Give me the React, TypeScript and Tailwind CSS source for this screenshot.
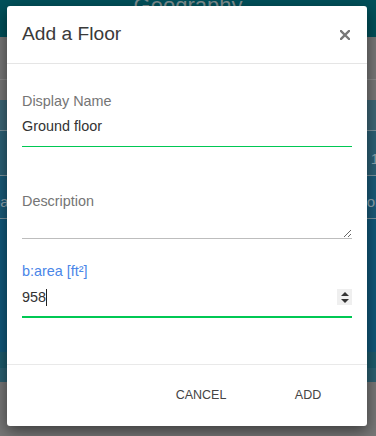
import React from "react";

const font = { fontFamily: '"Liberation Sans", Arial, sans-serif' };

export default function App() {
  return (
    <div
      className="relative w-[376px] h-[436px] overflow-hidden bg-[#777777]"
      style={font}
    >
      {/* Page behind the dimmed overlay */}
      <div className="flex flex-col w-full h-full">
        <div className="h-[37px] bg-[#00505a] flex justify-center overflow-hidden">
          <span className="text-[22px] leading-none text-[#7f8e90] -mt-[5px]">
            Geography
          </span>
        </div>
        <div className="h-[42px] bg-[#777777]" />
        <div className="h-px bg-[#8a8a8a]" />
        <div className="h-[20px] bg-[#777777]" />
        <div className="h-[30px] bg-[#3d6676]" />
        <div className="h-px bg-[#7c949d]" />
        <div className="h-[44px] bg-[#2c6176] flex justify-end items-end pb-[5px]">
          <span className="text-[15px] text-[#8fa6b0] mr-[-3px]">1</span>
        </div>
        <div className="h-px bg-[#7c949d]" />
        <div className="h-[42px] bg-[#1a5b79] flex justify-between items-end pb-[5px]">
          <span className="text-[15px] text-[#8fa6b0] ml-[-8px]">oa</span>
          <span className="text-[15px] text-[#8fa6b0] mr-[-4px]">or</span>
        </div>
        <div className="h-px bg-[#7c949d]" />
        <div className="h-[133px] bg-[#11587a]" />
        <div className="h-[16px] bg-[#1d5b6c]" />
        <div className="h-[14px] bg-[#2c6172]" />
        <div className="flex-1 bg-[#777777]" />
      </div>

      {/* Modal */}
      <div className="absolute left-[7px] top-[6px] w-[360px] h-[420px] bg-white rounded-[3px] shadow-[0_5px_15px_rgba(0,0,0,0.5)] flex flex-col">
        <div className="h-[58px] border-b border-[#e5e5e5] px-[15px] flex items-center justify-between">
          <span className="text-[19.2px] text-[#3a3a3a] leading-none -mt-[1px]">
            Add a Floor
          </span>
          <svg width="10" height="10" viewBox="0 0 10 10" className="mr-[2px]">
            <path
              d="M1 1 L9 9 M9 1 L1 9"
              stroke="#777"
              strokeWidth="2.4"
              strokeLinecap="square"
            />
          </svg>
        </div>

        <div className="h-[300px] px-[15px] pt-[27px] flex flex-col">
          <div className="h-[20px] leading-[20px] text-[14.4px] text-[#757575]">
            Display Name
          </div>
          <div className="mt-[5px] h-[31px] pb-[10px] border-b border-[#00c853] leading-[20px] text-[14.4px] text-[#333]">
            Ground floor
          </div>

          <div className="mt-[44px] h-[20px] leading-[20px] text-[14.4px] text-[#757575]">
            Description
          </div>
          <textarea
            className="mt-[5px] h-[23px] w-full border-b border-[#bdbdbd] resize-y outline-none text-[14.4px] text-[#333]"
            style={font}
            defaultValue=""
          />

          <div className="mt-[22px] h-[20px] leading-[20px] text-[14.4px] text-[#4a86e8]">
            b:area [ft²]
          </div>
          <div className="mt-[6px] h-[31px] pb-[9px] border-b-2 border-[#00c853] flex items-center justify-between">
            <div className="flex items-center h-[20px]">
              <span className="leading-[20px] text-[14.4px] text-[#333]">958</span>
              <span className="w-px h-[17px] bg-[#222]" />
            </div>
            <div className="w-[15px] h-[16px] bg-[#efefef] flex flex-col items-center justify-center gap-[3px]">
              <svg width="8" height="4" viewBox="0 0 8 4">
                <path d="M0 4 L4 0 L8 4 Z" fill="#333" />
              </svg>
              <svg width="8" height="4" viewBox="0 0 8 4">
                <path d="M0 0 L8 0 L4 4 Z" fill="#333" />
              </svg>
            </div>
          </div>
        </div>

        <div className="h-[62px] border-t border-[#e9e9e9] px-[15px] flex items-center justify-end gap-[19px]">
          <button className="w-[88px] text-center text-[12.5px] text-[#444] uppercase leading-none">
            Cancel
          </button>
          <button className="w-[88px] text-center text-[12.5px] text-[#444] uppercase leading-none">
            Add
          </button>
        </div>
      </div>
    </div>
  );
}
